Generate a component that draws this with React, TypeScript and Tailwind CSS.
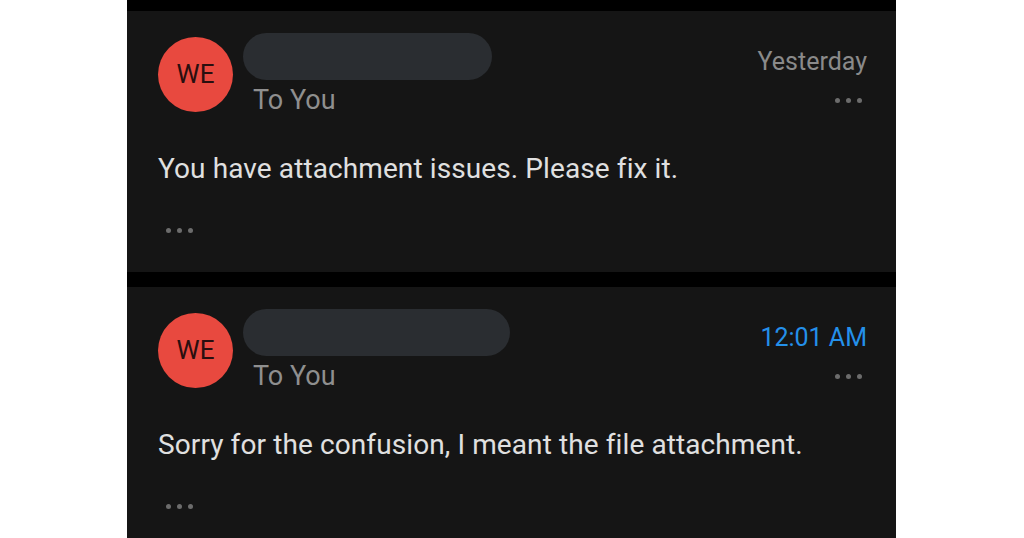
import React from "react";

function Dots() {
  return (
    <div className="flex gap-[6px]">
      <span className="w-[5px] h-[5px] rounded-full bg-[#6c6c6c]" />
      <span className="w-[5px] h-[5px] rounded-full bg-[#6c6c6c]" />
      <span className="w-[5px] h-[5px] rounded-full bg-[#6c6c6c]" />
    </div>
  );
}

function Card({
  pillW,
  time,
  timeClass,
  message,
}: {
  pillW: string;
  time: string;
  timeClass: string;
  message: string;
}) {
  return (
    <div className="bg-[#151515] pl-[31px] pr-[29px] pt-[22px] h-[261px] shrink-0">
      <div className="flex items-start">
        <div className="mt-[4px] w-[75px] h-[75px] rounded-full bg-[#e8493f] flex items-center justify-center text-[26px] text-[#2a0f0f] shrink-0">
          WE
        </div>
        <div className="ml-[10px] flex flex-col">
          <div className={`${pillW} h-[47px] rounded-full bg-[#2a2d31]`} />
          <div className="ml-[10px] mt-[5px] text-[27px] leading-[30px] text-[#8f8f8f]">To You</div>
        </div>
        <div className="ml-auto flex flex-col items-end">
          <div className={`mt-[15px] text-[25px] leading-[28px] ${timeClass}`}>{time}</div>
          <div className="mt-[22px] mr-[5px]">
            <Dots />
          </div>
        </div>
      </div>
      <div className="mt-[38px] text-[28px] leading-[32px] tracking-[0.1px] text-[#e0e0e0]">{message}</div>
      <div className="mt-[43px] ml-[8px]">
        <Dots />
      </div>
    </div>
  );
}

export default function App() {
  return (
    <div
      className="w-[1024px] h-[538px] bg-white flex justify-center overflow-hidden"
      style={{ fontFamily: "Roboto, 'Noto Sans', sans-serif" }}
    >
      <div className="w-[769px] ml-[-1px] bg-black pt-[11px] flex flex-col gap-[15px]">
        <Card
          pillW="w-[249px]"
          time="Yesterday"
          timeClass="text-[#8a8a8a]"
          message="You have attachment issues. Please fix it."
        />
        <Card
          pillW="w-[267px]"
          time="12:01 AM"
          timeClass="text-[#2490ea]"
          message="Sorry for the confusion, I meant the file attachment."
        />
      </div>
    </div>
  );
}
